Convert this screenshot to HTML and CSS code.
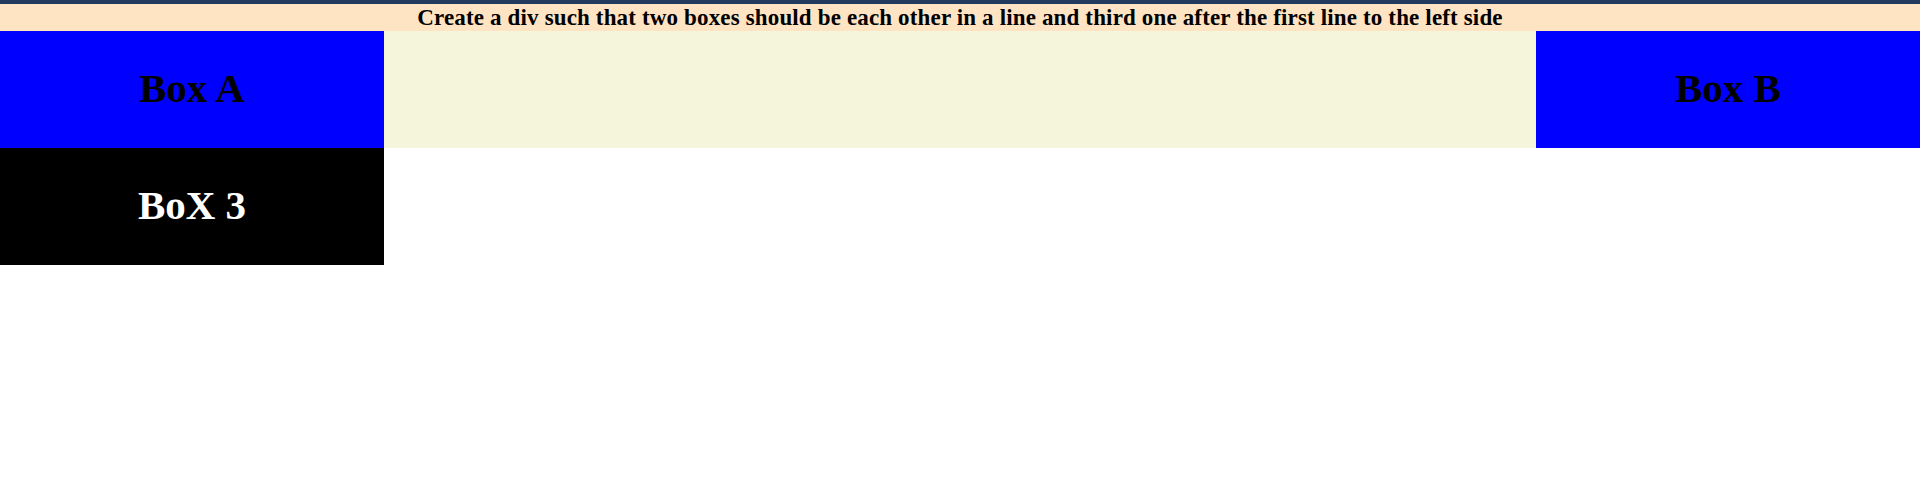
FILE: index.html
```html
<!DOCTYPE html>
<html>
<head>
<meta charset="utf-8">
<link rel="stylesheet" href="styles.css">
</head>
<body>
<div class="topbar"></div>
<div class="title">Create a div such that two boxes should be each other in a line and third one after the first line to the left side</div>
<div class="row">
  <div class="box box-a">Box A</div>
  <div class="box box-b">Box B</div>
</div>
<div class="box box-3">BoX 3</div>
</body>
</html>
```

FILE: styles.css
```css
html, body {
  margin: 0;
  padding: 0;
  background: #ffffff;
  font-family: "Liberation Serif", "Times New Roman", serif;
}
.topbar {
  height: 4px;
  background: #233a5e;
}
.title {
  height: 27px;
  line-height: 28px;
  background: #ffe4c4;
  text-align: center;
  font-weight: bold;
  font-size: 23px;
  letter-spacing: 0.15px;
  color: #000;
}
.row {
  display: flex;
  justify-content: space-between;
  background: #f5f5dc;
}
.box {
  width: 20%;
  height: 117px;
  box-sizing: border-box;
  padding-bottom: 3px;
  display: flex;
  align-items: center;
  justify-content: center;
  font-weight: bold;
  font-size: 41px;
}
.box-a, .box-b {
  background: #0000ff;
  color: #000;
}
.box-3 {
  background: #000;
  color: #fff;
}
```
